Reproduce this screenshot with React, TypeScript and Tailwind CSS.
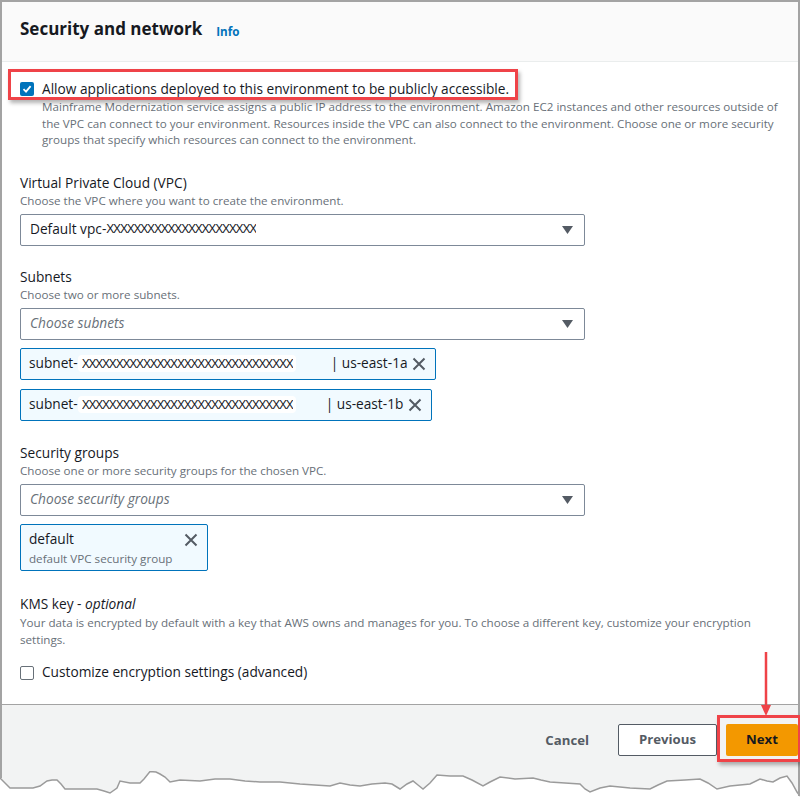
import React from "react";

const tornEdge: [number, number][] = [
  [0, 779], [10, 789], [22, 789], [33, 789], [40, 787], [47, 782], [52, 781], [57, 781], [61, 785], [65, 790],
  [80, 790], [97, 790], [104, 792], [110, 794], [117, 789], [120, 782], [130, 784], [140, 784], [144, 780],
  [150, 772.5], [156, 773], [160, 775], [165, 778], [170, 783], [180, 781], [200, 782], [215, 780], [230, 780],
  [245, 782], [260, 783], [280, 783], [300, 785], [315, 786], [330, 787], [340, 784], [350, 786], [360, 787],
  [372, 785], [385, 784], [392, 785], [400, 790], [407, 785], [413, 782], [418, 786], [423, 790], [430, 784],
  [437, 776], [450, 777], [463, 777], [472, 781], [483, 787], [490, 783], [500, 778], [515, 780], [533, 779],
  [541, 781], [550, 783], [565, 784], [580, 785], [585, 790], [590, 793], [600, 789], [610, 787], [630, 789],
  [650, 790], [658, 786], [667, 782], [685, 781], [700, 780], [708, 784], [717, 790], [730, 787], [750, 785],
  [760, 780], [767, 782], [773, 783], [780, 779], [787, 777], [792, 784], [797, 793], [800, 797],
];

const pts = tornEdge.map(([x, y]) => `${x},${y}`).join(" L");

function Caret() {
  return (
    <svg width="11" height="8" viewBox="0 0 11 8" className="shrink-0">
      <path d="M0 0 H11 L5.5 8 Z" fill="#545b64" />
    </svg>
  );
}

function CloseX() {
  return (
    <svg width="14" height="14" viewBox="0 0 14 14" className="shrink-0">
      <path d="M1.5 1.5 L12.5 12.5 M12.5 1.5 L1.5 12.5" stroke="#545b64" strokeWidth="2" />
    </svg>
  );
}

function Redacted({ count }: { count: number }) {
  return (
    <span className="font-['Liberation_Sans',sans-serif] text-[12px] tracking-[-1.2px] text-[#16191f] whitespace-nowrap overflow-hidden">
      {"X".repeat(count)}
    </span>
  );
}

function SelectBox({ children }: { children: React.ReactNode }) {
  return (
    <div className="w-[565px] h-[32px] border border-[#7d8998] rounded-[2px] bg-white flex items-center justify-between pl-[9px] pr-[11px]">
      <div className="flex items-center text-[13.7px] text-[#16191f]">{children}</div>
      <Caret />
    </div>
  );
}

function SubnetToken({ width, gap, zone }: { width: number; gap: number; zone: string }) {
  return (
    <div
      className="h-[32px] border border-[#0073bb] rounded-[2px] bg-[#f1faff] flex items-center pl-[8px] pr-[9px] text-[13.7px] text-[#16191f]"
      style={{ width }}
    >
      <span className="whitespace-nowrap shrink-0">subnet-</span>
      <span className="w-[218px] h-[17px] shrink-0 bg-white rounded-[4px] flex items-center pl-[4px] overflow-hidden">
        <Redacted count={31} />
      </span>
      <span className="whitespace-nowrap text-[#16191f]" style={{ marginLeft: gap }}>| {zone}</span>
      <span className="ml-auto"><CloseX /></span>
    </div>
  );
}

function Field({ label, desc, children, className }: { label: React.ReactNode; desc: string; children: React.ReactNode; className?: string }) {
  return (
    <div className={className}>
      <div className="text-[13.7px] leading-[20px] text-[#16191f] pt-px">{label}</div>
      <div className="text-[11.65px] leading-[16px] text-[#687078]">{desc}</div>
      {children}
    </div>
  );
}

export default function App() {
  return (
    <div className="relative w-[800px] h-[804px] overflow-hidden bg-white font-['Open_Sans',sans-serif]">
      <div className="border-x-2 border-t-2 border-[#a3a3a3]">
        {/* header */}
        <div className="h-[60px] bg-[#fafafa] border-b border-[#eaeded] flex items-start gap-[14px] px-[18px] pt-[13px]">
          <h2 className="text-[17px] leading-[28px] font-bold text-[#16191f]">Security and network</h2>
          <a className="text-[11.65px] leading-[28px] font-bold text-[#0073bb] pt-[3px]">Info</a>
        </div>

        {/* body */}
        <div className="pl-[18px] pr-[16px] pt-[17px] pb-[21px]">
          <div className="relative">
            <label className="flex items-center gap-[8px] h-[20px]">
              <span className="w-[14px] h-[14px] rounded-[2px] bg-[#0073bb] flex items-center justify-center">
                <svg width="10" height="10" viewBox="0 0 10 10">
                  <path d="M1.5 5.2 L4 7.6 L8.6 2.2" stroke="white" strokeWidth="1.8" fill="none" />
                </svg>
              </span>
              <span className="text-[13.7px] text-[#16191f]">Allow applications deployed to this environment to be publicly accessible.</span>
            </label>
            <div className="absolute left-[-12px] top-[-10px] w-[510px] h-[31px] border-[3px] border-[#ef4348] shadow-[2px_3px_4px_rgba(0,0,0,0.3)]" />
          </div>
          <p className="pl-[22px] text-[11.65px] leading-[16.5px] text-[#687078]">
            Mainframe Modernization service assigns a public IP address to the environment. Amazon EC2 instances and other resources outside of the VPC can connect to your environment. Resources inside the VPC can also connect to the environment. Choose one or more security groups that specify which resources can connect to the environment.
          </p>

          <Field className="mt-[23px]" label="Virtual Private Cloud (VPC)" desc="Choose the VPC where you want to create the environment.">
            <div className="mt-[5px]">
              <SelectBox>
                <span>Default vpc-</span>
                <Redacted count={22} />
              </SelectBox>
            </div>
          </Field>

          <Field className="mt-[20px]" label="Subnets" desc="Choose two or more subnets.">
            <div className="mt-[5px]">
              <SelectBox>
                <span className="italic text-[#687078]">Choose subnets</span>
              </SelectBox>
            </div>
            <div className="mt-[8px] flex flex-col gap-[9px]">
              <SubnetToken width={416} gap={35} zone="us-east-1a" />
              <SubnetToken width={412} gap={30} zone="us-east-1b" />
            </div>
          </Field>

          <Field className="mt-[21px]" label="Security groups" desc="Choose one or more security groups for the chosen VPC.">
            <div className="mt-[5px]">
              <SelectBox>
                <span className="italic text-[#687078]">Choose security groups</span>
              </SelectBox>
            </div>
            <div className="mt-[8px] w-[188px] h-[47px] border border-[#0073bb] rounded-[2px] bg-[#f1faff] flex justify-between pl-[8px] pr-[9px] pt-[4px]">
              <div>
                <div className="text-[13.7px] leading-[20px] text-[#16191f]">default</div>
                <div className="text-[11.65px] leading-[16px] text-[#687078] mt-[2px]">default VPC security group</div>
              </div>
              <div className="pt-[4px]"><CloseX /></div>
            </div>
          </Field>

          <div className="mt-[22px]">
            <div className="text-[13.7px] leading-[20px] text-[#16191f] pt-px">
              KMS key - <i>optional</i>
            </div>
            <p className="text-[11.65px] leading-[17px] text-[#687078]">
              Your data is encrypted by default with a key that AWS owns and manages for you. To choose a different key, customize your encryption settings.
            </p>
          </div>

          <label className="mt-[15px] flex items-center gap-[8px] h-[20px]">
            <span className="w-[14px] h-[14px] rounded-[2px] border border-[#687078] bg-white" />
            <span className="text-[13.7px] text-[#16191f]">Customize encryption settings (advanced)</span>
          </label>
        </div>

        {/* footer */}
        <div className="h-[67px] border-t border-[#a3a3a3] bg-[#f2f3f3] flex justify-end items-start pt-[19px]">
          <button className="text-[13.2px] leading-[32px] font-bold text-[#545b64] mr-[29px]">Cancel</button>
          <button className="w-[99px] h-[32px] border border-[#545b64] rounded-[2px] bg-white text-[13.2px] font-bold text-[#545b64] mr-[9px]">
            Previous
          </button>
          <div className="relative">
            <button className="w-[72px] h-[32px] rounded-[2px] bg-[#f39800] text-[13.2px] font-bold text-[#16191f]">
              Next
            </button>
            <div className="absolute left-[-9px] top-[-9px] w-[84px] h-[47px] border-[3px] border-[#ef4348] shadow-[2px_3px_4px_rgba(0,0,0,0.3)]" />
          </div>
        </div>
      </div>

      {/* torn bottom edge */}
      <svg width="800" height="32" viewBox="0 772 800 32" className="block">
        <path d={`M0,772 L${pts} L800,772 Z`} fill="#f2f3f3" />
        <path d={`M${pts}`} fill="none" stroke="#9b9b9b" strokeWidth="1.5" />
        <path d="M1,772 L1,779 M799,772 L799,797" stroke="#a3a3a3" strokeWidth="2" />
      </svg>

      {/* annotation arrow */}
      <svg className="absolute left-[758px] top-[650px]" width="16" height="68" viewBox="0 0 16 68">
        <path d="M8 2 V58" stroke="#ef4348" strokeWidth="2.5" />
        <path d="M3 55 L13 55 L8 66 Z" fill="#ef4348" />
      </svg>
    </div>
  );
}
